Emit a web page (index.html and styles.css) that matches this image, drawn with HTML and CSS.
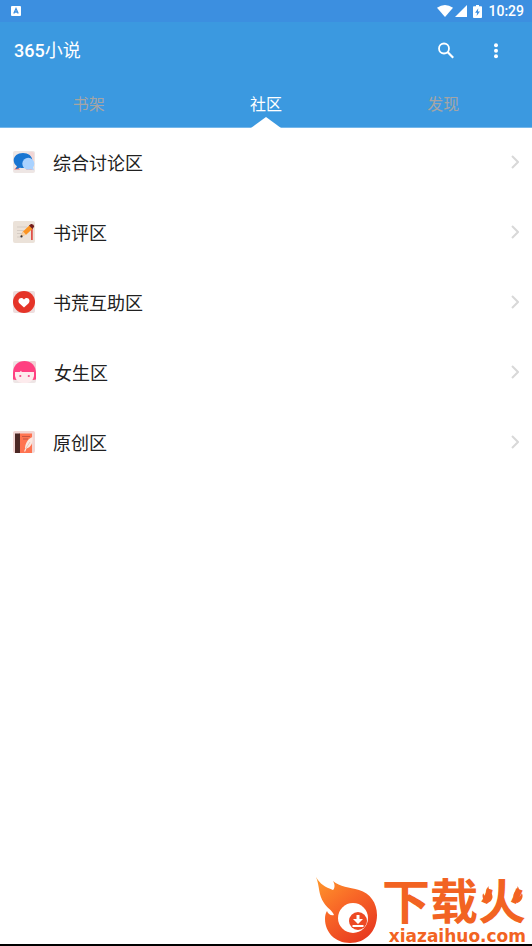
FILE: index.html
```html
<!DOCTYPE html>
<html lang="zh-CN">
<head>
<meta charset="utf-8">
<meta name="viewport" content="width=device-width, initial-scale=1">
<title>365小说</title>
<link rel="stylesheet" href="styles.css">
</head>
<body>
<header class="header">
  <div class="status">
    <svg class="status-app" viewBox="0 0 10 10" width="10" height="10" aria-hidden="true"><rect width="10" height="10" rx="1" fill="#fff"/><path d="M2.8 7.6 5 2.6l2.200 5M3.600 6h2.800" fill="none" stroke="#3c8fe0" stroke-width="1.300"/></svg>
    <div class="status-right">
      <svg viewBox="0 0 16 12" width="16" height="12" aria-hidden="true"><path d="M0 2.800Q8-2.600 16 2.800L8 12Z" fill="#fff"/></svg>
      <svg viewBox="0 0 12 12" width="12" height="12" aria-hidden="true"><path d="M12 0v12H0Z" fill="#fff"/></svg>
      <svg class="battery" viewBox="0 0 9 13" width="9" height="13" aria-hidden="true"><path d="M3 0h3v1.300h2.200q.8 0 .8.8v10q0 .9-.8.9H.8Q0 13 0 12.100v-10q0-.8.8-.8H3Z" fill="#fff"/><path d="M5.300 3.200 2.100 7.700h2l-.5 3.400 3.300-4.600h-2Z" fill="#3c8fe0"/></svg>
      <time>10:29</time>
    </div>
  </div>
  <div class="toolbar">
    <h1>365<span>小说</span></h1>
    <button class="tool" type="button" aria-label="搜索"><svg viewBox="0 0 18 18" width="18" height="18" aria-hidden="true"><circle cx="7" cy="6.500" r="5" fill="none" stroke="#fff" stroke-width="1.800"/><path d="m10.800 10.300 5.400 5.400" stroke="#fff" stroke-width="2.200"/></svg></button>
    <button class="tool" type="button" aria-label="更多"><svg viewBox="0 0 18 18" width="18" height="18" aria-hidden="true"><g fill="#fff"><circle cx="9" cy="3.300" r="2"/><circle cx="9" cy="8.800" r="2"/><circle cx="9" cy="14.300" r="2"/></g></svg></button>
  </div>
  <nav class="tabs">
    <a href="#shelf">书架</a>
    <a href="#community" class="active" aria-current="page">社区</a>
    <a href="#discover">发现</a>
  </nav>
</header>
<main>
  <ul class="list">
    <li><a href="#general">
      <svg class="icon" viewBox="0 0 22 22" aria-hidden="true"><rect width="22" height="22" rx="2" fill="#eee6e4"/><path d="M15 2q4-2.500 6 0v8l-5-3Z" fill="#f2d6d5"/><path d="M1 18.500l3-3 3 3ZM13 18.500l3-3 4 3Z" fill="#ef7770"/><path d="M10 2C4.500 2 .7 5.200.7 9.300c0 2.500 1.200 4.600 3.300 6L2.600 18.200 7 16.700c1 .3 2 .4 3 .4 5.300 0 9.300-3.400 9.300-7.700S15.300 2 10 2Z" fill="#1976d2"/><circle cx="15.300" cy="12.700" r="6" fill="#a9d2ff"/><path d="m17 18 4 1.300-1.300-4Z" fill="#a9d2ff"/></svg>
      <span>综合讨论区</span><svg class="chevron" viewBox="0 0 8 14" aria-hidden="true"><path d="m1 1 6 6-6 6"/></svg></a></li>
    <li><a href="#reviews">
      <svg class="icon" viewBox="0 0 22 22" aria-hidden="true"><rect width="22" height="22" rx="2" fill="#ebe2d9"/><path d="M4 6h10M4 9.500h7M4 12.500h5M4 16h4" stroke="#d5ccc4"/><path d="M18.900 7v12" stroke="#df4a42" stroke-width="1.700"/><path d="m8 15 2-4.500 6.500-6.300 3.300 3.300-6.700 6.300Z" fill="#fb9422"/><path d="m8 15 2-4.500 3.100 3.300Z" fill="#f4d2aa"/><circle cx="8.500" cy="15.400" r="1.100" fill="#302d30"/><path d="m16 4.500 2-1.500q3-.3 3.200 2.500L19.500 8Z" fill="#731d1d"/></svg>
      <span>书评区</span><svg class="chevron" viewBox="0 0 8 14" aria-hidden="true"><path d="m1 1 6 6-6 6"/></svg></a></li>
    <li><a href="#help">
      <svg class="icon" viewBox="0 0 22 22" aria-hidden="true"><rect width="22" height="22" rx="2" fill="#eedddd"/><circle cx="11" cy="11" r="11" fill="#e53428"/><path d="M11 16.500 6.600 12.500C4.500 10.400 5.500 7 8.300 7c1.200 0 2.100.6 2.700 1.500C11.600 7.600 12.500 7 13.700 7c2.800 0 3.800 3.400 1.700 5.500Z" fill="#fff"/></svg>
      <span>书荒互助区</span><svg class="chevron" viewBox="0 0 8 14" aria-hidden="true"><path d="m1 1 6 6-6 6"/></svg></a></li>
    <li><a href="#girls">
      <svg class="icon icon-wide" viewBox="0 0 23 22" aria-hidden="true"><rect width="23" height="22" rx="2" fill="#eee5e5"/><path d="M17 0h4q2 0 2 2v7Z" fill="#f1d1d4"/><path d="M0 18.500V12C0 4.500 5 0 11.500 0S23 4.500 23 12v6.500l-3 .5L3 19Z" fill="#ff4081"/><path d="M2 11h19v4q-1 6-7 7H9q-6-1-7-7Z" fill="#fdebed"/><path d="M6.500 11.200 8 9.800l1 1.400Z" fill="#fdebed"/><g fill="#f0488a"><circle cx="7.300" cy="15" r="1.100"/><circle cx="15.800" cy="15" r="1.100"/></g></svg>
      <span>女生区</span><svg class="chevron" viewBox="0 0 8 14" aria-hidden="true"><path d="m1 1 6 6-6 6"/></svg></a></li>
    <li><a href="#original">
      <svg class="icon" viewBox="0 0 22 22" aria-hidden="true"><rect width="22" height="22" rx="2" fill="#f2d6d4"/><path d="M6 2.500h13V22H6Z" fill="#ff7350"/><path d="M2 2.500h5V22H2Z" fill="#4c2824"/><path d="M9 5.500h8M10 8h5" stroke="#c75542"/><path d="M19.500 6c-4.500 1.500-7.500 6.500-7.500 12l-1 2.500h1.300l1.200-3C17.500 17 20.500 11.500 19.500 6Z" fill="#fbe8e0"/><path d="m12.500 18 4.500-7" stroke="#dfb5a8" stroke-width=".7"/></svg>
      <span>原创区</span><svg class="chevron" viewBox="0 0 8 14" aria-hidden="true"><path d="m1 1 6 6-6 6"/></svg></a></li>
  </ul>
</main>
<footer class="footer">
  <svg class="flame" viewBox="0 0 62 67" aria-hidden="true">
    <defs><linearGradient id="fire" x1="0" y1="0" x2=".7" y2="1"><stop offset="0" stop-color="#ff9a2c"/><stop offset=".5" stop-color="#f86627"/><stop offset="1" stop-color="#e83b20"/></linearGradient></defs>
    <path d="M0 0C4 7 9 10 17 13 19 11 19 7 17 4c7 6 16 6 26 9 11 3 18 13 18 25 0 16-11 28-27 28C19 66 9 55 9 42c0-3 .5-6 2-8 1 3 4 5 7 4-2-5-7-7-10-12C2 17 4 10 0 0Z" fill="url(#fire)"/>
    <circle cx="37" cy="41" r="15" fill="#fff"/>
    <circle cx="42" cy="44" r="9" fill="#ed4923"/>
    <path d="M40.500 38h3v4H47l-5 5-5-5h3.500ZM36.500 48h11v2h-11Z" fill="#fff"/>
  </svg>
  <div class="brand">
    <div class="brand-name">下载火<svg class="sparks" viewBox="0 0 46 20" aria-hidden="true"><path d="M7 0c-1 5 6 8 4 14-1 3-3 4-5 5C1 17-1 12 1 8c1 2 2 3 3 4 0-5 0-8 3-12ZM39 0c1 5-6 7-4 13 0 3 2 5 4 6 5-2 7-7 5-11-1 2-2 3-3 4 0-5 1-8-2-12Z"/></svg></div>
    <div class="brand-url">xiazaihuo.com</div>
  </div>
</footer>
</body>
</html>
```
FILE: styles.css
```css
* { box-sizing: border-box; }

body {
  margin: 0;
  min-height: 100vh;
  display: flex;
  flex-direction: column;
  background: #fff;
  color: #212121;
  font-family: Roboto, "Noto Sans CJK SC", sans-serif;
}

a { color: inherit; text-decoration: none; }
svg { display: block; flex: none; }

.header {
  background: #3b99e0;
  color: #fff;
  border-bottom: 1px solid #75b7ea;
}

.status {
  height: 22px;
  padding: 0 8px 0 11px;
  display: flex;
  align-items: center;
  justify-content: space-between;
  background: #3c8fe0;
}
.status-right {
  display: flex;
  align-items: center;
  gap: 2px;
  font-size: 14px;
  font-weight: 500;
  line-height: 22px;
}
.battery { margin: 0 4px; }

.toolbar {
  height: 58px;
  padding: 0 11px 0 14px;
  display: flex;
  align-items: center;
}
.toolbar h1 {
  flex: 1;
  margin: 0;
  font-size: 18px;
  font-weight: 500;
  line-height: 24px;
}
.toolbar h1 span { font-weight: 400; }
.tool {
  width: 50px;
  height: 48px;
  padding: 0;
  display: grid;
  place-items: center;
  border: 0;
  background: none;
}

.tabs {
  height: 47px;
  display: grid;
  grid-template-columns: repeat(3, 1fr);
  color: #a5a5a5;
  font-size: 16px;
  line-height: 50px;
  text-align: center;
}
.tabs a { position: relative; height: 47px; }
.tabs .active { color: #fff; }
.tabs .active::after {
  content: "";
  position: absolute;
  left: calc(50% - 15px);
  bottom: -1px;
  border: 15px solid transparent;
  border-top: 0;
  border-bottom: 11px solid #fff;
}

main { flex: 1; }
.list {
  margin: 0;
  padding: 0;
  list-style: none;
}
.list a {
  height: 70px;
  padding: 0 13px 2px;
  display: flex;
  align-items: center;
  font-size: 18px;
  line-height: 24px;
}
.list span {
  flex: 1;
  margin-left: 18px;
  padding-top: 4px;
}
.icon { width: 22px; height: 22px; }
.icon-wide { width: 23px; }
.chevron {
  width: 8px;
  height: 14px;
  fill: none;
  stroke: #d8d8d8;
  stroke-width: 2;
}

.footer {
  display: flex;
  justify-content: flex-end;
  padding-right: 6px;
  border-bottom: 2px solid #000;
  color: #f26322;
}
.flame { width: 62px; height: 67px; }
.brand {
  display: flex;
  flex-direction: column;
  align-items: flex-end;
  justify-content: flex-end;
  min-width: 148px;
}
.brand-name {
  position: relative;
  font-size: 48px;
  font-weight: 700;
  line-height: 50px;
}
.sparks {
  position: absolute;
  top: 8px;
  right: 0;
  width: 46px;
  height: 18px;
  fill: #f26322;
}
.brand-url {
  font-family: "DejaVu Sans", sans-serif;
  font-size: 17px;
  font-weight: 700;
  line-height: 16px;
}
```
